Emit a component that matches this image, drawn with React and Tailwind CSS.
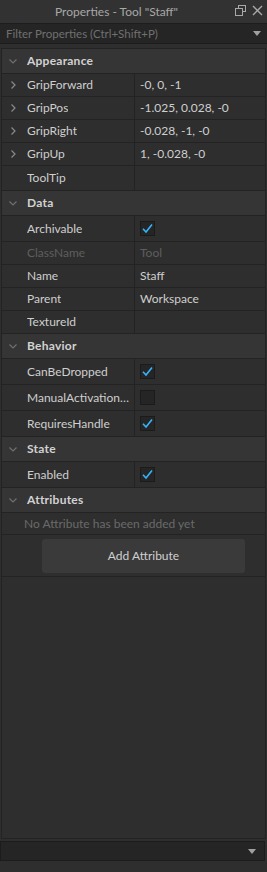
import React from 'react';

const font = { fontFamily: 'Lato, "Noto Sans", sans-serif' };

function Chevron({ open }) {
    return (
        <svg width="10" height="10" viewBox="0 0 10 10" className="shrink-0">
            {open ? (
                <path d="M1.5 3.5 L5 7 L8.5 3.5" fill="none" stroke="#6f6f6f" strokeWidth="1.2" />
            ) : (
                <path d="M3.5 1.5 L7 5 L3.5 8.5" fill="none" stroke="#8a8a8a" strokeWidth="1.2" />
            )}
        </svg>
    );
}

function Check({ on }) {
    return (
        <div className="w-[15px] h-[15px] bg-[#252525] border border-[#1b1b1b] flex items-center justify-center">
            {on && (
                <svg width="13" height="13" viewBox="0 0 13 13">
                    <path d="M2 6.8 L5 10 L11 2.5" fill="none" stroke="#35b3ff" strokeWidth="1.6" />
                </svg>
            )}
        </div>
    );
}

function Section({ title }) {
    return (
        <div className="h-[25px] shrink-0 flex items-center gap-[9px] pl-[6px] bg-[#353535] border-b border-[#232323]">
            <Chevron open />
            <span className="text-[12px] font-bold tracking-[0.02em] text-[#d2d2d2]">{title}</span>
        </div>
    );
}

function Row({ name, value, expand, check, dim, tall }) {
    const h = check !== undefined ? 'h-[26px]' : tall ? 'h-[25px]' : 'h-[23px]';
    return (
        <div className={`flex shrink-0 border-b border-[#232323] ${h}`}>
            <div className="w-[133px] shrink-0 flex items-center border-r border-[#232323] pl-[6px] gap-[9px] overflow-hidden">
                <div className="w-[10px] shrink-0">{expand && <Chevron />}</div>
                <span className={`text-[12px] truncate ${dim ? 'text-[#5e5e5e]' : 'text-[#cfcfcf]'}`}>{name}</span>
            </div>
            <div className="flex-1 flex items-center pl-[5px]">
                {check !== undefined ? (
                    <Check on={check} />
                ) : (
                    <span className={`text-[12px] ${dim ? 'text-[#5e5e5e]' : 'text-[#cfcfcf]'}`}>{value}</span>
                )}
            </div>
        </div>
    );
}

export default function App() {
    return (
        <div className="w-[267px] h-[872px] bg-[#2e2e2e] flex flex-col" style={font}>
            {/* Title bar */}
            <div className="h-[23px] shrink-0 flex items-center relative bg-[#323232] pr-[34px]">
                <span className="flex-1 text-center text-[12px] text-[#a8a8a8]">Properties - Tool "Staff"</span>
                <div className="absolute right-[4px] top-[5px] flex items-center gap-[6px]">
                    <svg width="11" height="11" viewBox="0 0 11 11">
                        <rect x="3.5" y="0.5" width="7" height="6" fill="none" stroke="#a8a8a8" />
                        <rect x="0.5" y="3.5" width="7" height="7" fill="#323232" stroke="#a8a8a8" />
                    </svg>
                    <svg width="11" height="11" viewBox="0 0 11 11">
                        <path d="M1 1 L10 10 M10 1 L1 10" stroke="#a8a8a8" strokeWidth="1.4" />
                    </svg>
                </div>
            </div>

            {/* Filter */}
            <div className="h-[21px] shrink-0 flex items-center justify-between px-[6px] bg-[#252525] border-y border-[#1c1c1c]">
                <span className="text-[11.5px] text-[#707070]">Filter Properties (Ctrl+Shift+P)</span>
                <svg width="8" height="5" viewBox="0 0 8 5">
                    <path d="M0 0 H8 L4 5 Z" fill="#a0a0a0" />
                </svg>
            </div>

            {/* Property grid */}
            <div className="mt-[4px] mx-[1px] h-[791px] shrink-0 border border-[#232323] flex flex-col">
                <Section title="Appearance" />
                <Row name="GripForward" value="-0, 0, -1" expand />
                <Row name="GripPos" value="-1.025, 0.028, -0" expand />
                <Row name="GripRight" value="-0.028, -1, -0" expand />
                <Row name="GripUp" value="1, -0.028, -0" expand />
                <Row name="ToolTip" value="" tall />
                <Section title="Data" />
                <Row name="Archivable" check />
                <Row name="ClassName" value="Tool" dim />
                <Row name="Name" value="Staff" />
                <Row name="Parent" value="Workspace" />
                <Row name="TextureId" value="" />
                <Section title="Behavior" />
                <Row name="CanBeDropped" check />
                <Row name="ManualActivationOnly" check={false} />
                <Row name="RequiresHandle" check />
                <Section title="State" />
                <Row name="Enabled" check />
                <Section title="Attributes" />
                <div className="h-[22px] shrink-0 flex items-center pl-[22px] border-b border-[#232323]">
                    <span className="text-[12px] text-[#6a6a6a]">No Attribute has been added yet</span>
                </div>
                <div className="pt-[4px] pb-[3px] shrink-0 flex justify-center border-b border-[#232323]">
                    <div className="w-[203px] h-[34px] rounded-[3px] bg-[#3a3a3a] flex items-center justify-center ml-[20px]">
                        <span className="text-[12px] text-[#d0d0d0]">Add Attribute</span>
                    </div>
                </div>
            </div>

            {/* Bottom bar */}
            <div className="mt-[2px] mr-[2px] h-[20px] shrink-0 flex items-center justify-end px-[8px] bg-[#252525] border border-[#1c1c1c]">
                <svg width="8" height="5" viewBox="0 0 8 5">
                    <path d="M0 0 H8 L4 5 Z" fill="#a0a0a0" />
                </svg>
            </div>
        </div>
    );
}
